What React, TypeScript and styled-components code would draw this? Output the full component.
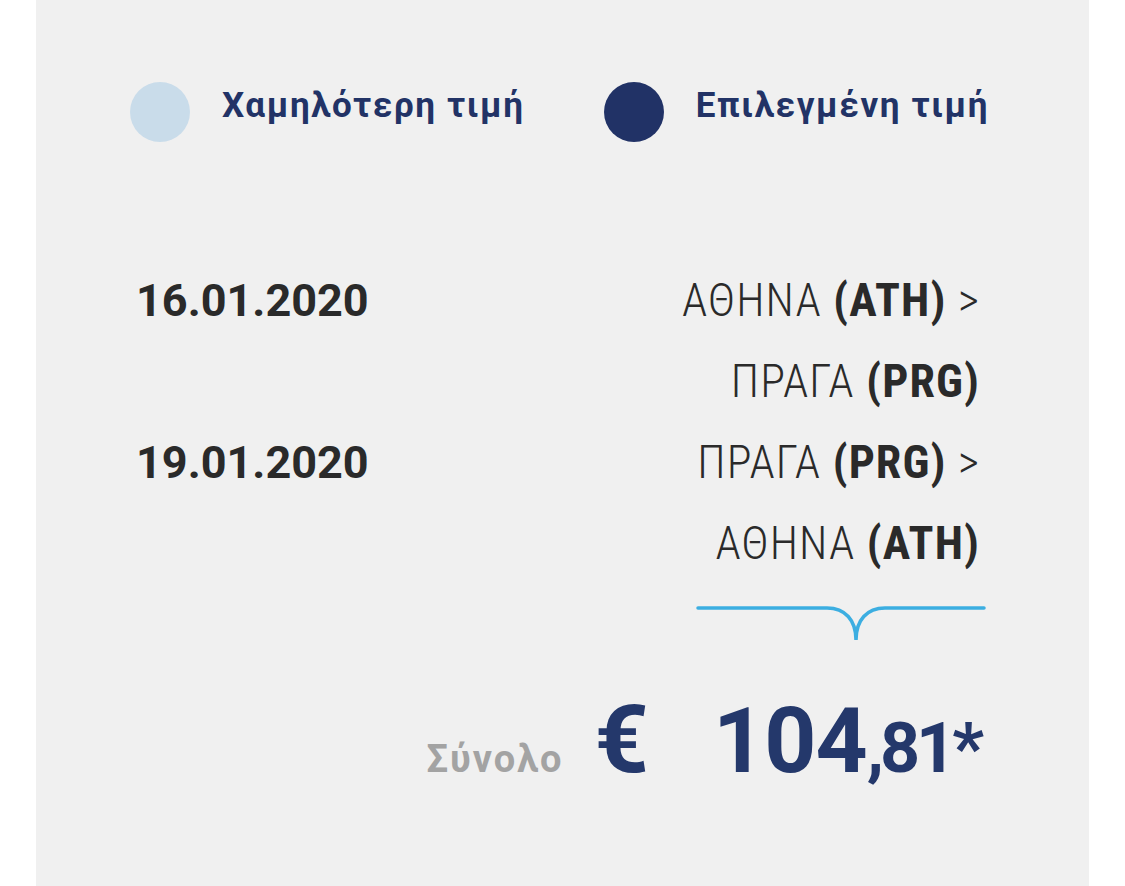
import styled, { createGlobalStyle } from 'styled-components';

const GlobalStyle = createGlobalStyle`
  html, body {
    margin: 0;
    padding: 0;
    background: #ffffff;
  }
  body {
    font-family: Roboto, "Noto Sans", "DejaVu Sans", sans-serif;
  }
`;

const Panel = styled.div`
  margin: 0 36px;
  min-height: 886px;
  box-sizing: border-box;
  background: #f0f0f0;
  padding: 82px 109px 0 100px;
`;

const Legend = styled.div`
  display: flex;
  align-items: center;
  margin-left: -6px;
  height: 60px;
  white-space: nowrap;
`;

const LegendItem = styled.div`
  display: flex;
  align-items: center;
  gap: 32px;
  margin-right: 79px;
  flex-shrink: 0;
`;

const Dot = styled.span<{ $color: string }>`
  width: 60px;
  height: 60px;
  border-radius: 50%;
  background: ${(p) => p.$color};
  flex-shrink: 0;
`;

const LegendLabel = styled.span`
  font-size: 35px;
  font-weight: 700;
  color: #223366;
  letter-spacing: 1.6px;
  margin-bottom: 14px;
`;

const Trips = styled.div`
  margin-top: 118px;
  display: grid;
  grid-template-columns: 1fr auto;
  font-size: 46px;
  line-height: 81px;
  color: #2a2a2a;
`;

const Date = styled.div`
  font-size: 45px;
  font-weight: 700;
`;

const Route = styled.div`
  text-align: right;
  font-weight: 300;
  font-stretch: condensed;
  letter-spacing: 1.1px;
`;

const Code = styled.b`
  font-weight: 700;
`;

const Divider = styled.div`
  display: flex;
  justify-content: flex-end;
  margin-top: 20px;
  margin-right: -6px;
`;

const Total = styled.div`
  display: flex;
  justify-content: flex-end;
  align-items: baseline;
  margin-top: 40px;
  color: #24386b;
  font-weight: 700;
`;

const TotalLabel = styled.span`
  font-size: 38px;
  color: #a3a3a3;
  letter-spacing: 2px;
  margin-right: 31px;
`;

const Currency = styled.span`
  font-size: 95px;
  margin-right: 64px;
`;

const Amount = styled.span`
  font-size: 91px;
  letter-spacing: -1px;
`;

const Cents = styled.span`
  font-size: 70px;
  letter-spacing: -4px;
`;

const trips = [
  {
    date: '16.01.2020',
    legs: [
      { city: 'ΑΘΗΝΑ', code: 'ATH', more: true },
      { city: 'ΠΡΑΓΑ', code: 'PRG', more: false },
    ],
  },
  {
    date: '19.01.2020',
    legs: [
      { city: 'ΠΡΑΓΑ', code: 'PRG', more: true },
      { city: 'ΑΘΗΝΑ', code: 'ATH', more: false },
    ],
  },
];

export default function App() {
  return (
    <>
      <GlobalStyle />
      <Panel>
        <Legend>
          <LegendItem>
            <Dot $color="#c9dcea" />
            <LegendLabel>Χαμηλότερη τιμή</LegendLabel>
          </LegendItem>
          <LegendItem>
            <Dot $color="#213266" />
            <LegendLabel>Επιλεγμένη τιμή</LegendLabel>
          </LegendItem>
        </Legend>

        <Trips>
          {trips.map((t) => (
            <>
              <Date key={t.date}>{t.date}</Date>
              <Route>
                {t.legs.map((l, i) => (
                  <div key={i}>
                    {l.city} <Code>({l.code})</Code>
                    {l.more ? ' >' : ''}
                  </div>
                ))}
              </Route>
            </>
          ))}
        </Trips>

        <Divider>
          {/* underline with a small downward notch */}
          <svg width="292" height="40" viewBox="0 0 292 40">
            <path
              d="M4 4 H133 C151 4 162 16 162 36 C162 16 173 4 191 4 H290"
              fill="none"
              stroke="#3caee1"
              strokeWidth="3.5"
              strokeLinecap="round"
            />
          </svg>
        </Divider>

        <Total>
          <TotalLabel>Σύνολο</TotalLabel>
          <Currency>€</Currency>
          <Amount>104</Amount>
          <Cents>,81*</Cents>
        </Total>
      </Panel>
    </>
  );
}
